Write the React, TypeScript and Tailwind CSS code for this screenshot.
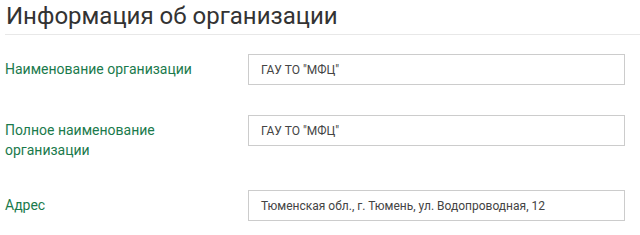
import React from "react";

const rows = [
  { label: "Наименование организации", value: 'ГАУ ТО "МФЦ"' },
  { label: "Полное наименование организации", value: 'ГАУ ТО "МФЦ"', two: true },
  { label: "Адрес", value: "Тюменская обл., г. Тюмень, ул. Водопроводная, 12" },
];

export default function App() {
  return (
    <div className="w-[640px] h-[235px] bg-white pl-[5px] overflow-hidden" style={{ fontFamily: "Roboto, 'Noto Sans', sans-serif" }}>
      <div className="pt-[2px] pb-[4px] border-b border-[#e8e8e8]">
        <h1 className="text-[24px] leading-[28px] text-[#333333] pl-[1px]">Информация об организации</h1>
      </div>
      <div className="pt-[19px]">
        {rows.map((r, i) => (
          <div key={i} className="flex items-start mb-[30px]">
            <div className={`w-[243px] pt-[5px] text-[14px] leading-[20px] text-[#1a7a4c] ${r.two ? "pr-[80px]" : ""}`}>{r.label}</div>
            <div className="w-[377px] h-[31px] border border-[#cccccc] bg-white flex items-center px-[12px] text-[12px] text-[#444444]">
              {r.value}
            </div>
          </div>
        ))}
      </div>
    </div>
  );
}
